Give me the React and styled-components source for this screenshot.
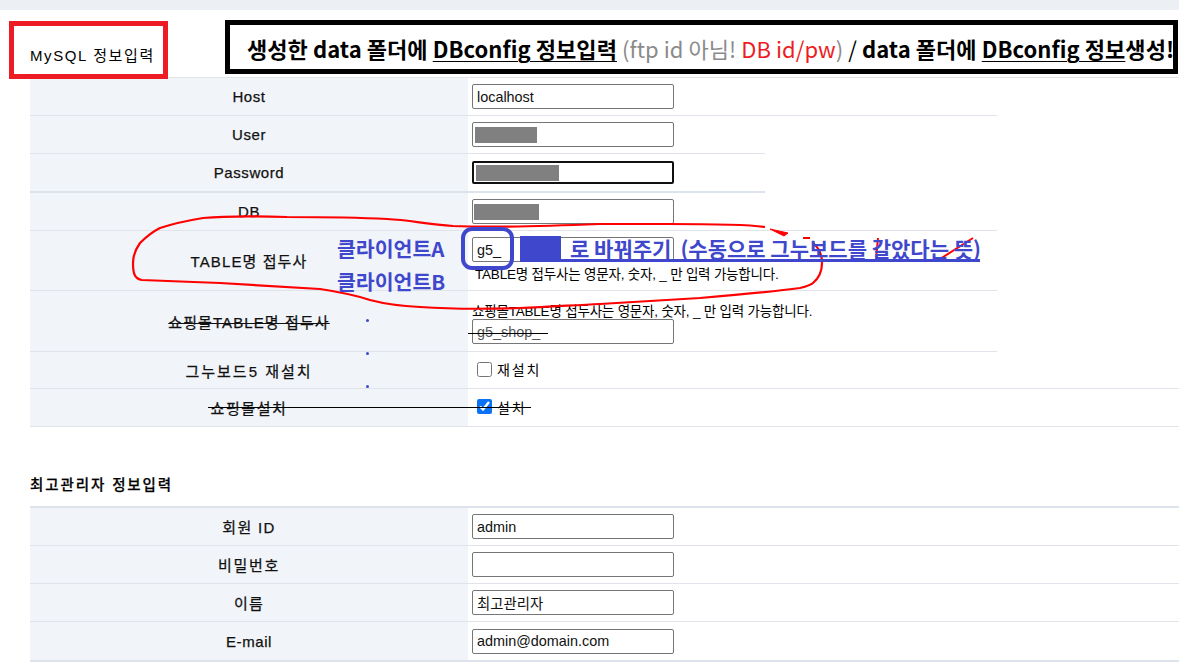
import React from 'react';
import styled, { createGlobalStyle } from 'styled-components';

const GlobalStyle = createGlobalStyle`
  html, body { margin: 0; padding: 0; background: #fff; }
  body { font-family: "Liberation Sans", "Noto Sans CJK KR", sans-serif; color: #000; }
`;

function Field({ value, redact, redactLeft, focused, dim }) {
  return (
    <FieldBox>
      <TextInput readOnly value={value || ''} $focused={focused} $dim={dim} />
      {redact && <Redact $w={redact} $x={redactLeft} />}
    </FieldBox>
  );
}

function FormRow({ label, width, height, spacing, strike, heavy, align, children }) {
  return (
    <Row $w={width} $h={height} $heavy={heavy}>
      <Label $strike={strike} $ls={spacing}>{label}</Label>
      <Cell $align={align}>{children}</Cell>
    </Row>
  );
}

function Scribbles() {
  return (
    <Overlay width="1179" height="668" viewBox="0 0 1179 668">
      <path
        d="M765 227 C745 224 700 224 667 224 C640 224 620 224 600 224 C550 226 500 228 453 226 C425 224 410 220 387 219 C350 217 320 217 287 217 C255 216 225 216 203 218 C185 221 172 224 160 228 C150 233 145 238 140 243 C135 250 133 256 133 263 C133 272 134 279 142 280 C165 281 195 282 220 283 C255 285 290 287 320 289 C340 292 355 295 370 300 C385 304 400 306 420 307 C450 309 490 309 520 308 C550 307 575 305 600 304 C635 302 665 300 700 298 C735 295 770 292 800 288 C808 286 812 284 813 283 C819 278 822 271 822 263 C822 255 819 248 813 243"
        fill="none" stroke="#ff0000" strokeWidth="2.2"
      />
      <path d="M770 229 L788 233 L784 236 Z" fill="#ff0000" stroke="#ff0000" strokeWidth="1" />
      <path d="M803 238 L810 238" fill="none" stroke="#ff0000" strokeWidth="2" />
      <path d="M878 238 L876 259 M940 259 L973 238" fill="none" stroke="#ff0000" strokeWidth="2" />
      <path d="M208 407.5 H531" stroke="#000" strokeWidth="1" />
      <path d="M468 333.5 H548" stroke="#000" strokeWidth="1" />
      <rect x="463" y="229" width="49" height="39" rx="9" fill="none" stroke="#3f48cc" strokeWidth="4" />
      <rect x="520" y="236" width="41" height="26" fill="#3f48cc" />
      <rect x="520" y="259" width="460" height="3" fill="#3f48cc" />
      <rect x="366" y="319" width="3" height="3" rx="1.5" fill="#3f48cc" />
      <rect x="366" y="352" width="3" height="3" rx="1.5" fill="#3f48cc" />
      <rect x="366" y="385" width="3" height="3" rx="1.5" fill="#3f48cc" />
    </Overlay>
  );
}

export default function App() {
  return (
    <Page>
      <GlobalStyle />
      <TopBand />
      <SectionHead>
        <SectionTitle>MySQL 정보입력</SectionTitle>
      </SectionHead>
      <FormTable>
        <FormRow label="Host" width={967} height={38}><Field value="localhost" /></FormRow>
        <FormRow label="User" width={735} height={38}><Field redact={62} redactLeft={3} /></FormRow>
        <FormRow label="Password" width={735} height={39} heavy><Field redact={83} redactLeft={4} focused /></FormRow>
        <FormRow label="DB" width={967} height={38}><Field redact={65} redactLeft={2} /></FormRow>
        <FormRow label="TABLE명 접두사" width={967} height={60} spacing={1.1} align="top">
          <Field value="g5_" />
          <Help $indent={3}>TABLE명 접두사는 영문자, 숫자, _ 만 입력 가능합니다.</Help>
        </FormRow>
        <FormRow label="쇼핑몰TABLE명 접두사" width={967} height={61} spacing={1.1} strike align="bottom">
          <Help>쇼핑몰TABLE명 접두사는 영문자, 숫자, _ 만 입력 가능합니다.</Help>
          <Field value="g5_shop_" dim />
        </FormRow>
        <FormRow label="그누보드5 재설치" width={1149} height={37} spacing={2}>
          <CheckLabel><input type="checkbox" readOnly />재설치</CheckLabel>
        </FormRow>
        <FormRow label="쇼핑몰설치" width={1149} height={38} spacing={1.6}>
          <CheckLabel><input type="checkbox" checked readOnly />설치</CheckLabel>
        </FormRow>
      </FormTable>

      <AdminHead>최고관리자 정보입력</AdminHead>
      <FormTable $admin>
        <FormRow label="회원 ID" width={1149} height={38} spacing={1.3}><Field value="admin" /></FormRow>
        <FormRow label="비밀번호" width={1149} height={38} spacing={1.7}><Field /></FormRow>
        <FormRow label="이름" width={1149} height={38} spacing={1.2}><Field value="최고관리자" /></FormRow>
        <FormRow label="E-mail" width={1149} height={40} heavy><Field value="admin@domain.com" /></FormRow>
      </FormTable>

      <Scribbles />
      <RedBox />
      <Banner>
        <b>생성한 data 폴더에 <u>DBconfig 정보입력</u></b>
        <Muted> (ftp id 아님! </Muted>
        <Alert>DB id/pw</Alert>
        <Muted>)</Muted> / <b>data 폴더에 <u>DBconfig 정보</u>생성!</b>
      </Banner>
      <ClientTag $top={235}>클라이언트A</ClientTag>
      <ClientTag $top={268}>클라이언트B</ClientTag>
      <Note>
        <span>로 바꿔주기</span>
        <span>(수동으로 그누보드를 갈았다는 뜻)</span>
      </Note>
    </Page>
  );
}

const Page = styled.div`
  position: relative;
  width: 1179px;
  height: 668px;
  overflow: hidden;
`;
const TopBand = styled.div`
  height: 10px;
  background: #eceff4;
`;
const SectionHead = styled.div`
  height: 67px;
  padding-left: 30px;
  display: flex;
  align-items: flex-start;
`;
const SectionTitle = styled.h2`
  margin: 37px 0 0;
  font-size: 15px;
  line-height: 17px;
  font-weight: 400;
  letter-spacing: 1.6px;
`;
const AdminHead = styled.h2`
  margin: 49px 0 12px 30px;
  font-size: 14.5px;
  line-height: 18px;
  font-weight: 500;
  letter-spacing: 1.9px;
  -webkit-text-stroke: 0.25px #111;
`;
const FormTable = styled.div`
  border-top: ${(p) => (p.$admin ? '2px solid #dde3ea' : '1px solid #e1e4e8')};
  margin-left: 30px;
`;
const Row = styled.div`
  width: ${(p) => p.$w}px;
  height: ${(p) => p.$h}px;
  box-sizing: border-box;
  border-bottom: ${(p) => (p.$heavy ? '2px solid #dde3ea' : '1px solid #e0e4ea')};
  display: grid;
  grid-template-columns: 438px 1fr;
`;
const Label = styled.div`
  background: #f1f4f9;
  display: flex;
  align-items: center;
  justify-content: center;
  font-size: 15px;
  letter-spacing: ${(p) => p.$ls ?? 0.6}px;
  color: #111;
  -webkit-text-stroke: 0.25px #111;
  text-decoration: ${(p) => (p.$strike ? 'line-through' : 'none')};
`;
const Cell = styled.div`
  padding: ${(p) => (p.$align === 'top' ? '6px 0 0 4px' : p.$align === 'bottom' ? '0 0 7px 4px' : '0 0 0 4px')};
  display: flex;
  flex-direction: column;
  justify-content: ${(p) => (p.$align === 'top' ? 'flex-start' : p.$align === 'bottom' ? 'flex-end' : 'center')};
  gap: ${(p) => (p.$align === 'top' ? '5px' : '0')};
`;
const FieldBox = styled.div`
  position: relative;
  width: 202px;
  height: 25px;
  flex: none;
  display: flex;
  align-items: center;
`;
const TextInput = styled.input`
  box-sizing: border-box;
  width: 100%;
  height: ${(p) => (p.$focused ? '23px' : '25px')};
  padding: 0 4px;
  border: ${(p) => (p.$focused ? '2px solid #101010' : '1px solid #767676')};
  border-radius: 2px;
  font: 14.4px "Liberation Sans", "Noto Sans CJK KR", sans-serif;
  color: ${(p) => (p.$dim ? '#555' : '#111')};
  outline: none;
`;
const Redact = styled.div`
  position: absolute;
  left: ${(p) => p.$x}px;
  top: 5px;
  width: ${(p) => p.$w}px;
  height: 16px;
  background: #808080;
`;
const Help = styled.p`
  margin: 0 0 0 ${(p) => p.$indent || 0}px;
  font-size: 13.5px;
  line-height: 15px;
  letter-spacing: -0.2px;
  white-space: nowrap;
`;
const CheckLabel = styled.label`
  display: flex;
  align-items: center;
  gap: 5px;
  font-size: 14px;
  letter-spacing: 1.9px;
  padding: 0 0 2px 5px;
  input { margin: 0; width: 15px; height: 15px; accent-color: #0b72f5; }
`;
const Overlay = styled.svg`
  position: absolute;
  left: 0;
  top: 0;
  pointer-events: none;
`;
const RedBox = styled.div`
  position: absolute;
  left: 9px;
  top: 21px;
  width: 159px;
  height: 58px;
  box-sizing: border-box;
  border: 5px solid #ed1c24;
`;
const Banner = styled.div`
  position: absolute;
  left: 225px;
  top: 20px;
  width: 953px;
  height: 54px;
  box-sizing: border-box;
  border: 5px solid #000;
  padding-left: 17px;
  background: #fff;
  white-space: pre;
  font-family: "Noto Sans CJK KR", sans-serif;
  font-size: 22px;
  line-height: 46px;
  letter-spacing: 0.06px;
  u { text-underline-offset: 3px; text-decoration-thickness: 1px; }
`;
const Muted = styled.span`
  color: #8a8a8a;
`;
const Alert = styled.span`
  color: #ed1c24;
`;
const ClientTag = styled.div`
  position: absolute;
  left: 337px;
  top: ${(p) => p.$top}px;
  font-family: "Noto Sans CJK KR", sans-serif;
  font-size: 20.5px;
  line-height: 26px;
  font-weight: 700;
  color: #3f48cc;
`;
const Note = styled.div`
  position: absolute;
  left: 570px;
  top: 236px;
  display: flex;
  gap: 9px;
  font-family: "Noto Sans CJK KR", sans-serif;
  font-size: 21px;
  line-height: 24px;
  font-weight: 700;
  color: #3f48cc;
`;
